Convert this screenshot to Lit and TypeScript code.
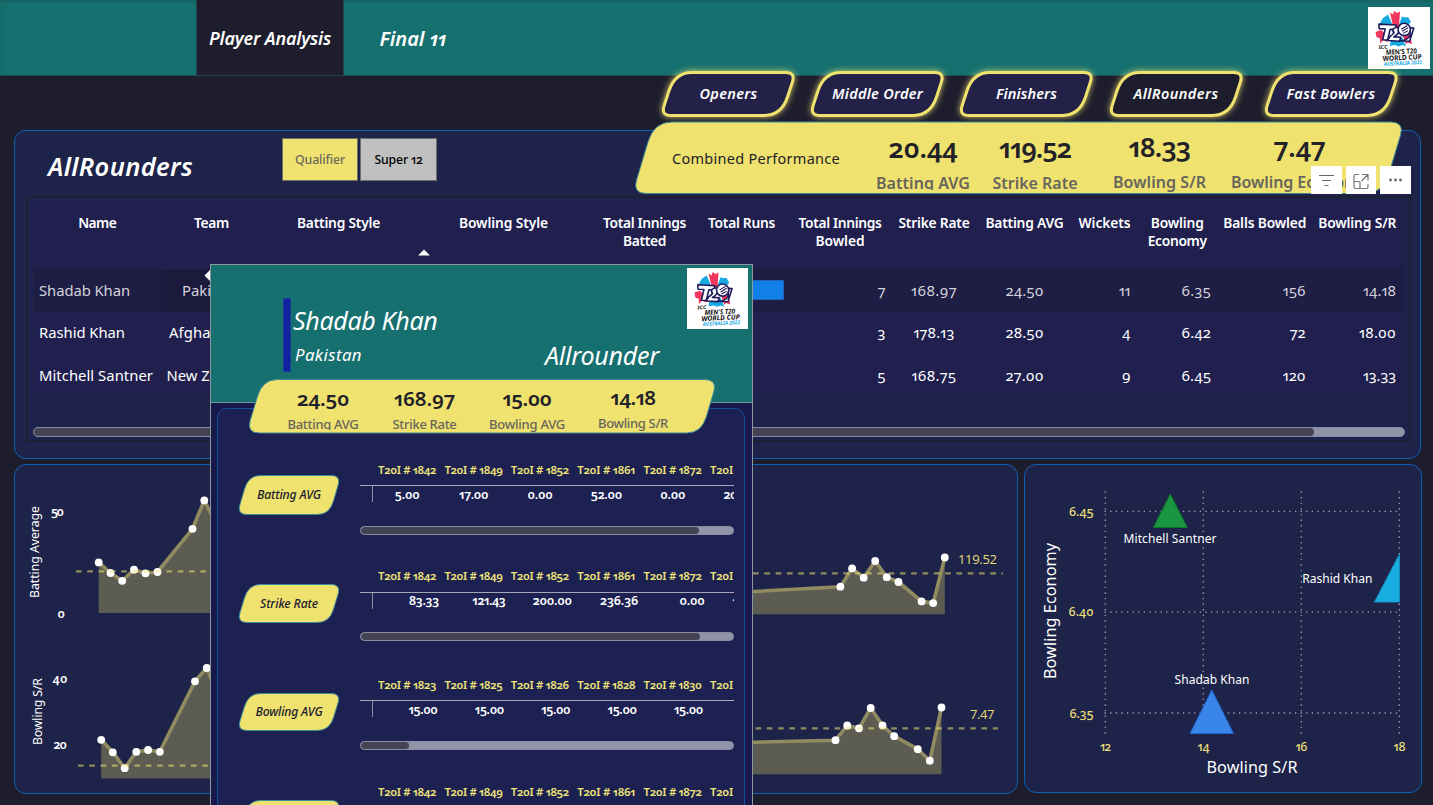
import { LitElement, html, svg, css } from "lit";
import { classMap } from "lit/directives/class-map.js";
import { styleMap } from "lit/directives/style-map.js";

/** A single line of text tracked out (or in) to a given width. */
class FitText extends LitElement {
  static properties = { w: { type: Number }, text: {}, spacing: { state: true } };
  static styles = css`
    :host { display: inline-block; white-space: nowrap; text-align: left; font-variant-ligatures: none; }
  `;
  declare w: number;
  declare text: string;
  declare spacing: number;
  constructor() {
    super();
    this.w = 0;
    this.text = "";
    this.spacing = 0;
  }
  firstUpdated() {
    const span = this.renderRoot.querySelector("span") as HTMLElement;
    const natural = span.getBoundingClientRect().width;
    const n = Math.max(1, this.text.length);
    if (this.w && natural) this.spacing = (this.w - natural) / n;
  }
  render() {
    return html`<span style=${styleMap({ letterSpacing: this.spacing + "px" })}>${this.text}</span>`;
  }
}
customElements.define("fit-text", FitText);

const fit = (text: string, w: number) => html`<fit-text .text=${text} .w=${w}></fit-text>`;

/** Slanted plate: wide rounding top-left and bottom-right, tight rounding on the acute corners. */
function platePath(w: number, h: number, s: number, R: number, r: number) {
  const k = s / Math.hypot(s, h);
  const c = h / Math.hypot(s, h);
  const R2 = R * 1.15;
  return [
    `M${s + R} 0`,
    `L${w - r} 0`,
    `Q${w} 0 ${w - k * r} ${c * r}`,
    `L${w - s + k * R2} ${h - c * R2}`,
    `Q${w - s} ${h} ${w - s - R} ${h}`,
    `L${r} ${h}`,
    `Q0 ${h} ${k * r} ${h - c * r}`,
    `L${s - k * R2} ${c * R2}`,
    `Q${s} 0 ${s + R} 0Z`,
  ].join(" ");
}

const logo = svg`
  <rect width="62" height="62" fill="#fff"/>
  <path d="M11 18L15 11L20 7.500L25 19Z M31 18L34 9.500L38 10.500L40 10L43 15L39 19Z M23 30L34 30L38 39.500L34.500 38L30.500 39.500L27 38L22 39Z" fill="#19a9e1"/>
  <path d="M22 5.500L25.200 7.500L26 4L29 6L32 4.500L31 20L25.200 20Z M7.500 25L13 23L20 29L19 35L15.500 33L12 36.500L12 31.500L8.500 30Z M35 29L45 27L42.500 30.500L44 37L39.500 35.500L38 37.500Z" fill="#f0365c"/>
  <g transform="rotate(3 28 26)" stroke="#1d1a5b" stroke-width="1.6" fill="#fff" stroke-linejoin="round">
    <path d="M10.500 18H28L27 22.500H22L20 33.500H15L17 22.500H11Z"/>
    <path d="M25 22Q31 18 31 23Q31 27 26 30L33 30L32 34H20L22 30Q28 25 25 25Z"/>
    <path d="M42 20L45.500 20L42 33.500H32Q40 33 42 28Z"/>
    <circle cx="36" cy="22" r="6.200"/>
    <path d="M33 22L39 18M34 24L40 20M35 26L40 23" stroke-width="1.100" fill="none"/>
  </g>
  <g transform="rotate(-3 31 48)" class="lg">
    <text x="11" y="41" textLength="9" lengthAdjust="spacingAndGlyphs" font-size="5" fill="#222">ICC</text>
    <text x="18" y="47.200" textLength="31" lengthAdjust="spacingAndGlyphs" font-size="7" fill="#111">MEN'S T20</text>
    <text x="14.500" y="53.200" textLength="39" lengthAdjust="spacingAndGlyphs" font-size="7" fill="#111">WORLD CUP</text>
    <text x="15.500" y="58.200" textLength="38" lengthAdjust="spacingAndGlyphs" font-size="5.400" fill="#19a9e1">AUSTRALIA 2022</text>
  </g>`;

const tabs = [
  { x: 662, label: "Openers", w: 58 },
  { x: 811, label: "Middle Order", w: 91 },
  { x: 960, label: "Finishers", w: 61 },
  { x: 1109.5, label: "AllRounders", w: 85, active: true },
  { x: 1264.5, label: "Fast Bowlers", w: 89 },
];

const kpis = [
  { v: "20.44", vw: 69, l: "Batting AVG", lw: 94, c: 923, clip: true },
  { v: "119.52", vw: 72, l: "Strike Rate", lw: 85, c: 1035 },
  { v: "18.33", vw: 62, l: "Bowling S/R", lw: 93, c: 1159.5, up: true },
  { v: "7.47", vw: 52, l: "Bowling Economy", lw: 137, c: 1299.5, up: true },
];

const headers: [string, number][][] = [
  [["Name", 38]],
  [["Team", 35]],
  [["Batting Style", 83]],
  [["Bowling Style", 89]],
  [["Total Innings", 83], ["Batted", 43]],
  [["Total Runs", 67]],
  [["Total Innings", 83], ["Bowled", 49]],
  [["Strike Rate", 71]],
  [["Batting AVG", 78]],
  [["Wickets", 52]],
  [["Bowling", 53], ["Economy", 59]],
  [["Balls Bowled", 83]],
  [["Bowling S/R", 78]],
];

const players = [
  { name: "Shadab Khan", nw: 91, team: "Pakistan", tw: 59, inn: "7", sr: ["168.97", 46], avg: "24.50", wk: "11", eco: "6.35", balls: "156", bsr: ["14.18", 33], hover: true },
  { name: "Rashid Khan", nw: 86, team: "Afghanistan", tw: 85, inn: "3", sr: ["178.13", 41], avg: "28.50", wk: "4", eco: "6.42", balls: "72", bsr: ["18.00", 37] },
  { name: "Mitchell Santner", nw: 114, team: "New Zealand", tw: 90, inn: "5", sr: ["168.75", 45], avg: "27.00", wk: "9", eco: "6.45", balls: "120", bsr: ["13.33", 33] },
] as any[];

const cardKpis = [
  { v: "24.50", vw: 52, l: "Batting AVG", lw: 71, c: 323, clip: true },
  { v: "168.97", vw: 61, l: "Strike Rate", lw: 64, c: 424.5 },
  { v: "15.00", vw: 49, l: "Bowling AVG", lw: 76, c: 527 },
  { v: "14.18", vw: 45, l: "Bowling S/R", lw: 70, c: 633, up: true },
];

const cardRows = [
  { label: "Batting AVG", lw: 64, h: 106, gap: 16, ph: 39.5, ids: [1842, 1849, 1852, 1861, 1872], vals: [["5.00", 25], ["17.00", 29], ["0.00", 25], ["52.00", 31], ["0.00", 25], ["20.00", 31]], mid: true, thumb: 338 },
  { label: "Strike Rate", lw: 58, h: 108.5, gap: 19, ph: 38.5, ids: [1842, 1849, 1852, 1861, 1872], vals: [["83.33", 30], ["121.43", 33], ["200.00", 39], ["236.36", 38], ["0.00", 25], ["133.33", 38]], low: true, thumb: 339 },
  { label: "Bowling AVG", lw: 67, h: 107.5, gap: 19, ph: 37.5, ids: [1823, 1825, 1826, 1828, 1830], vals: [["15.00", 29], ["15.00", 29], ["15.00", 29], ["15.00", 29], ["15.00", 29]], thumb: 48 },
  { label: "Bowling S/R", lw: 66, h: 107.5, gap: 19, ph: 38.5, ids: [1842, 1849, 1852, 1861, 1872], vals: [], thumb: 338 },
] as any[];

type P = [number, number];
const series: { pts: P[]; base: number }[] = [
  { base: 613, pts: [[98.7, 562.4], [110.5, 573], [122.2, 580.8], [134, 569.7], [145.5, 573.3], [157.5, 572], [192.5, 528.8], [204.3, 500.4], [216, 524], [300, 560]] },
  { base: 778.5, pts: [[101.2, 739.8], [112.8, 752.3], [124.7, 768.2], [136.3, 751.8], [148.1, 750], [159.8, 751.8], [195, 681.3], [206.8, 668], [218, 696], [300, 740]] },
  { base: 614.3, pts: [[700, 594.5], [840.4, 586.7], [852.1, 568.4], [863.7, 577.7], [875.2, 561], [886.8, 577.2], [898.5, 582], [921.6, 601.4], [933.2, 603.1], [944.8, 557.5]] },
  { base: 774.3, pts: [[700, 743.6], [835.5, 740.2], [847.2, 725.5], [859, 728.3], [870.7, 708], [882.5, 725.3], [894.2, 736.2], [917.8, 749.2], [929.8, 760.7], [941.5, 707.5]] },
];
const refs = [
  { x1: 76, x2: 400, y: 571.4 },
  { x1: 78, x2: 400, y: 765.6 },
  { x1: 741.7, x2: 1003, y: 573.4 },
  { x1: 744.2, x2: 998, y: 728.4 },
];

class AppRoot extends LitElement {
  static styles = css`
    :host {
      display: block; position: relative; width: 1433px; height: 805px; overflow: hidden;
      background: #1e1d2d; color: #fff;
      font-family: "Noto Sans", "Open Sans", sans-serif;
      font-variant-numeric: oldstyle-nums proportional-nums;
    }
    * { box-sizing: border-box; }
    svg { display: block; overflow: visible; }
    .center { display: flex; align-items: center; justify-content: center; }

    .top { height: 76px; background: #16706f; border-bottom: 1px solid #1d4b57; display: flex; padding-left: 196px; box-shadow: inset 0 2px 3px rgba(0,0,0,.12); }
    .nav { height: 76px; font-style: italic; font-weight: 600; }
    .nav.on { width: 148px; background: #1e1d2d; border: 1px solid #23454f; border-top: 0; font-size: 18px; padding-top: 1px; }
    .nav.off { width: 138px; font-size: 20px; padding-top: 1px; }
    .logo { width: 62px; height: 62px; margin: 7px 3px 0 auto; }
    .lg { font-weight: 700; font-variant-numeric: lining-nums; }

    .tab { position: absolute; top: 71px; width: 133px; height: 46px; padding-bottom: 2px; font-size: 14.5px; font-style: italic; font-weight: 600; }
    .tab svg, .banner > svg, .pill svg, .strip > svg { position: absolute; inset: 0; }
    .tab fit-text, .pill fit-text { position: relative; }
    .glow { filter: drop-shadow(0 0 3px rgba(240,228,112,.85)); }

    .panel { background: #1e2349; border: 1px solid #0f60b3; border-radius: 12px; }
    .main { margin: 54px 0 0 14px; width: 1407px; height: 329px; padding: 7px 9px 0 11px; }
    .bar { height: 58px; display: flex; padding: 0 0 0 22px; }
    .bar h1 { margin: 0; width: 234px; font-size: 25.5px; line-height: 34px; padding-top: 11px; font-style: italic; font-weight: 600; }
    .chip { height: 43px; border: 1.5px solid #6e6e6e; font-size: 12.3px; font-weight: 500; }
    .chip.y { width: 76px; background: #efe26f; color: #6b6860; margin-right: 2px; }
    .chip.g { width: 77px; background: #c0c0c0; color: #000; }

    .grid { border: 2px solid #1e1f31; height: 246px; padding: 3px 4px 0 6px; display: flex; flex-direction: column; background: #1e234b; }
    .row { display: grid; grid-template-columns: 126.5px 102px 152px 178px 104px 90px 107px 81px 100px 60px 85.5px 89.5px 95.5px; background: #201f4e; width: 1371px; }
    .head { height: 68px; font-size: 13.8px; font-weight: 600; line-height: 18px; padding-top: 13px; position: relative; }
    .head > div { text-align: center; display: flex; flex-direction: column; align-items: center; }
    .line { height: 42.7px; align-items: center; font-size: 14.8px; }
    .line.hover { background: #1e1d44; color: #d4d3dc; }
    .line > div { height: 100%; display: flex; align-items: center; padding-bottom: 2px; }
    .line.hover > div { padding-bottom: 1px; }
    .line .l { padding-left: 5px; }
    .line .c { justify-content: center; }
    .line .r { justify-content: flex-end; padding-right: 9px; }
    .line .r2 { justify-content: flex-end; padding-right: 4px; }
    .line .r3 { justify-content: flex-end; padding-right: 8px; }
    .line .r4 { justify-content: flex-end; padding-right: 4px; }
    .hover .tc { background: #1b1a3c; }
    .databar { width: 87px; height: 20px; background: #1080e8; border: 1px solid #2060b8; flex: none; }
    .sort { position: absolute; left: 384px; top: 48px; }
    .scroll { background: #9193a9; border: 1px solid #8a8ca2; border-radius: 6px; overflow: hidden; }
    .thumb { height: 100%; background: #434354; border-radius: 5px; }
    .grid .scroll { width: 1372px; height: 10px; margin: 30px 0 0 -1px; }

    .banner { position: absolute; left: 632px; top: 122px; width: 773px; height: 72px; color: #222128; }
    .caption { position: absolute; left: 40px; top: 25px; font-size: 14.5px; line-height: 22px; }
    .kpi { position: absolute; top: 6px; width: 140px; margin-left: -70px; text-align: center; }
    .kpi .v { font-size: 27px; line-height: 40px; height: 40px; font-weight: 600; }
    .kpi .l { font-size: 16px; line-height: 22px; font-weight: 600; color: #68655c; height: 26px; overflow: hidden; margin-top: 4px; }
    .kpi .l.clip { height: 18px; }
    .banner .kpi.up { margin-top: -1px; }

    .tool { position: absolute; top: 166px; height: 28px; background: #fff; }

    .lower { display: flex; gap: 6px; margin: 5px 0 0 14px; }
    .trend { width: 1004px; height: 330px; }
    .scatter { width: 398px; height: 329px; }
    .lower svg { margin: -1px; }

    .card { position: absolute; left: 210px; top: 264px; width: 543px; height: 560px; border: 1px solid #8b999c; background: #19184a; }
    .cardtop { height: 138px; background: #16706f; border-bottom: 1px solid #6f9a9c; position: relative; font-style: italic; display: flex; padding: 33px 0 0 72px; }
    .stripe { width: 8px; height: 74px; background: #1121a0; border: 1px solid #15409a; flex: none; }
    .who { padding: 4px 0 0 2px; width: 255px; flex: none; }
    .who .n { font-size: 25px; line-height: 36px; }
    .who .t { font-size: 16.8px; line-height: 24px; margin: 5px 0 0 2px; }
    .role { font-size: 25px; line-height: 34px; padding-top: 40px; margin-left: -1px; }
    .cardlogo { position: absolute; left: 476px; top: 3px; width: 61px; height: 61px; }
    .strip { position: absolute; left: 35px; top: 114px; width: 470px; height: 55px; color: #222128; }
    .strip .kpi { top: 2px; width: 90px; margin-left: -45px; }
    .strip .kpi.up { top: 1px; }
    .strip .v { font-size: 20.5px; line-height: 34px; height: 34px; }
    .strip .l { font-size: 13px; line-height: 20px; height: 22px; margin-top: -1px; font-weight: 500; }
    .strip .l.clip { height: 15.5px; }
    .inner { margin: 5px 7px 0 6px; height: 440px; border: 1px solid #11519c; border-radius: 10px; background: #1c2152; padding: 50px 0 0 20px; position: relative; }
    .stat { display: flex; }
    .pill { position: relative; width: 102px; font-size: 12.2px; font-style: italic; font-weight: 500; color: #1c1c30; flex: none; }
    .matches { width: 374px; margin-left: 20px; overflow: hidden; }
    .cells { display: grid; grid-template-columns: repeat(5, 66.4px) 66px; padding-left: 14px; width: 420px; font-weight: 600; }
    .ids { height: 27px; font-size: 11.4px; line-height: 22px; color: #efe478; border-bottom: 1px solid #a6a8b8; }
    .ids.low { height: 28px; }
    .ids > div { padding-left: 4px; }
    .vals { height: 40px; font-size: 12.4px; line-height: 18px; position: relative; }
    .vals.low { height: 39px; line-height: 16px; }
    .vals > div { text-align: right; padding-right: 3px; white-space: nowrap; }
    .vals.low > div { padding-right: 1.5px; }
    .vals.mid > div { text-align: center; padding-right: 0; }
    .tick { position: absolute; left: 12px; top: 0; width: 1px; height: 16px; background: #8c8ea6; }
    .stat .scroll { height: 9px; width: 374px; }
    .pointer { position: absolute; left: 204px; top: 270px; }
    .ax { font-weight: 600; }
    .seg { font-family: "Open Sans", sans-serif; font-variant-numeric: lining-nums; }
  `;

  renderTrends() {
    return svg`
      ${series.map(({ pts, base }) => {
        const d = pts.map((p) => p.join(" ")).join(" L");
        return svg`
          <path d="M${pts[0][0]} ${base} L${d} L${pts[pts.length - 1][0]} ${base}Z" fill="#5d5c53"/>
          <path d=${"M" + d} fill="none" stroke="#918b60" stroke-width="3.6" stroke-linejoin="round"/>`;
      })}
      ${series.map(({ pts }) => pts.map(([x, y]) => svg`<circle cx=${x} cy=${y} r="3.9" fill="#fff"/>`))}
      ${refs.map((r) => svg`<line x1=${r.x1} x2=${r.x2} y1=${r.y} y2=${r.y} stroke="#efe26f" stroke-opacity=".55" stroke-width="2.3" stroke-dasharray="5.65 5.65"/>`)}
      <g fill="#fff" font-size="12.3" class="ax">
        <text x="51" y="516" textLength="13">50</text>
        <text x="57.5" y="618" textLength="7">0</text>
        <text x="52.5" y="683" textLength="15">40</text>
        <text x="53.5" y="749" textLength="13.5">20</text>
      </g>
      <g fill="#fff" font-size="12.3">
        <text transform="translate(38.5 598) rotate(-90)" textLength="92">Batting Average</text>
        <text transform="translate(41.5 745) rotate(-90)" textLength="67">Bowling S/R</text>
      </g>
      <g fill="#e8dd78" font-size="13" class="seg">
        <text x="958" y="564" textLength="39">119.52</text>
        <text x="970" y="719" textLength="24.5">7.47</text>
      </g>`;
  }

  renderScatter() {
    return svg`
      <g stroke="#9b9da8" stroke-width="1.3" stroke-dasharray="1.4 4.2">
        ${[1105.3, 1203.3, 1301.3, 1399.3].map((x) => svg`<line x1=${x} x2=${x} y1="491.5" y2="735"/>`)}
        ${[511.4, 612.2, 713].map((y) => svg`<line y1=${y} y2=${y} x1="1104.5" x2="1399"/>`)}
      </g>
      <path d="M1170.3 494L1187.3 527.5H1153.3Z" fill="#1a9a41" stroke="#0b7425" fill-opacity=".97"/>
      <path d="M1399.3 554.5V602H1374.5Z" fill="#19aee0" stroke="#1590c4"/>
      <path d="M1211.8 690L1233.5 733.5H1190Z" fill="#3a86e8" stroke="#1f63cc"/>
      <g fill="#fff" font-size="12">
        <text x="1123.5" y="543" textLength="93">Mitchell Santner</text>
        <text x="1302.3" y="583" textLength="70">Rashid Khan</text>
        <text x="1174.5" y="684" textLength="75">Shadab Khan</text>
        <text x="1206.5" y="773" font-size="16.2" textLength="91">Bowling S/R</text>
        <text transform="translate(1055.5 679) rotate(-90)" font-size="16.2" textLength="136">Bowling Economy</text>
      </g>
      <g fill="#e8dd78" font-size="12.4" font-weight="500">
        <text x="1069" y="516" textLength="24.5">6.45</text>
        <text x="1068.5" y="616" textLength="25">6.40</text>
        <text x="1069.5" y="717.5" textLength="24">6.35</text>
        <text x="1100" y="751" textLength="11">12</text>
        <text x="1197.5" y="751" textLength="12">14</text>
        <text x="1295.5" y="751" textLength="12">16</text>
        <text x="1393.5" y="751" textLength="12">18</text>
      </g>`;
  }

  render() {
    return html`
      <header class="top">
        <div class="nav on center">${fit("Player Analysis", 122)}</div>
        <div class="nav off center">${fit("Final 11", 67)}</div>
        <svg class="logo" viewBox="0 0 62 62">${logo}</svg>
      </header>

      <section class="panel main">
        <div class="bar">
          <h1>${fit("AllRounders", 145)}</h1>
          <div class="chip y center">${fit("Qualifier", 50)}</div>
          <div class="chip g center">${fit("Super 12", 48)}</div>
        </div>
        <div class="grid">
          <div class="row head">
            ${headers.map((h) => html`<div>${h.map(([t, w]) => fit(t, w))}</div>`)}
            <svg class="sort" width="12" height="7"><path d="M0 6.5L6 .5L12 6.5Z" fill="#fff"/></svg>
          </div>
          ${players.map(
            (p) => html`<div class=${classMap({ row: true, line: true, hover: !!p.hover })}>
              <div class="l">${fit(p.name, p.nw)}</div>
              <div class="c tc">${fit(p.team, p.tw)}</div>
              <div></div><div></div><div></div>
              <div>${p.hover ? html`<div class="databar"></div>` : null}</div>
              <div class="r3">${p.inn}</div>
              <div class="c">${fit(p.sr[0], p.sr[1])}</div>
              <div class="c">${fit(p.avg, 38)}</div>
              <div class="r2">${p.wk}</div>
              <div class="r">${fit(p.eco, 29.5)}</div>
              <div class="r4">${p.balls}</div>
              <div class="r">${fit(p.bsr[0], p.bsr[1])}</div>
            </div>`,
          )}
          <div class="scroll"><div class="thumb" style=${styleMap({ width: "1280px" })}></div></div>
        </div>
      </section>

      <section class="lower">
        <div class="panel trend"><svg width="1004" height="330" viewBox="14 464 1004 330">${this.renderTrends()}</svg></div>
        <div class="panel scatter"><svg width="398" height="329" viewBox="1024 464 398 329">${this.renderScatter()}</svg></div>
      </section>

      ${tabs.map(
        (t) => html`<div class="tab center" style=${styleMap({ left: t.x + "px" })}>
          <svg width="133" height="46"><path class="glow" transform="translate(-1 1.4)" d=${platePath(134.5, 43, 14, 17, 10)}
            fill=${t.active ? "#1e1d2d" : "#232148"} stroke="#efe26f" stroke-width="3"/></svg>
          ${fit(t.label, t.w)}
        </div>`,
      )}

      <div class="banner">
        <svg width="773" height="72"><path transform="translate(.5 0)" d=${platePath(772, 71.5, 21.5, 18, 14)} fill="#efe26f" stroke="#3d8a9a"/></svg>
        <div class="caption">${fit("Combined Performance", 168)}</div>
        ${kpis.map(
          (k) => html`<div class=${classMap({ kpi: true, up: !!k.up })} style=${styleMap({ left: k.c - 632 + "px" })}>
            <div class="v">${fit(k.v, k.vw)}</div>
            <div class=${classMap({ l: true, clip: !!k.clip })}>${fit(k.l, k.lw)}</div>
          </div>`,
        )}
      </div>

      <svg class="tool" style=${styleMap({ left: "1311px" })} width="31" height="28"><path d="M8 9.500H23M11 14.500H20M13.500 19.500H17.500" stroke="#666" stroke-width="1.2" fill="none"/></svg>
      <svg class="tool" style=${styleMap({ left: "1346px" })} width="30" height="28"><path d="M13 8.500H9.500Q8 8.500 8 10V21Q8 22.500 9.500 22.500H20.500Q22 22.500 22 21V18M8 15.500H12.500Q14 15.500 14 17V22.500M16 8.500H22V14.500M22 8.500L15.500 15" stroke="#777" stroke-width="1.2" fill="none"/></svg>
      <svg class="tool" style=${styleMap({ left: "1380px" })} width="31" height="28"><g fill="#666"><circle cx="10.500" cy="14" r="1.400"/><circle cx="15.500" cy="14" r="1.400"/><circle cx="20.500" cy="14" r="1.400"/></g></svg>

      <svg class="pointer" width="6" height="11"><path d="M6 0V11L.5 5.500Z" fill="#fff"/></svg>

      <aside class="card">
        <div class="cardtop">
          <div class="stripe"></div>
          <div class="who">
            <div class="n">${fit("Shadab Khan", 144.500)}</div>
            <div class="t">${fit("Pakistan", 67)}</div>
          </div>
          <div class="role">${fit("Allrounder", 114)}</div>
          <svg class="cardlogo" viewBox="0 0 62 62">${logo}</svg>
        </div>
        <div class="inner">
          ${cardRows.map(
            (r) => html`<div class="stat" style=${styleMap({ height: r.h + "px" })}>
              <div class="pill center" style=${styleMap({ marginTop: r.gap + "px", height: r.ph + "px" })}>
                <svg width="102" height=${r.ph}><path transform="translate(-1 .5)" d=${platePath(104, r.ph - 0.5, 11.5, 12, 10)} fill="#efe26f" stroke="#3d8a9a"/></svg>
                ${fit(r.label, r.lw)}
              </div>
              <div class="matches">
                <div class=${classMap({ cells: true, ids: true, low: !!r.low })}>${r.ids.map((i: number) => html`<div>${fit("T20I # " + i, 58)}</div>`)}<div>${fit("T20I", 23)}</div></div>
                <div class=${classMap({ cells: true, vals: true, mid: !!r.mid, low: !!r.low })}>
                  <span class="tick"></span>
                  ${r.vals.map(([v, w]: [string, number]) => html`<div>${fit(v, w)}</div>`)}
                </div>
                <div class="scroll"><div class="thumb" style=${styleMap({ width: r.thumb + "px" })}></div></div>
              </div>
            </div>`,
          )}
        </div>
        <div class="strip">
          <svg width="470" height="55"><path transform="translate(.5 .5)" d=${platePath(471, 53.5, 16, 15, 13)} fill="#efe26f" stroke="#3d8a9a"/></svg>
          ${cardKpis.map(
            (k) => html`<div class=${classMap({ kpi: true, up: !!k.up })} style=${styleMap({ left: k.c - 246 + "px" })}>
              <div class="v">${fit(k.v, k.vw)}</div>
              <div class=${classMap({ l: true, clip: !!k.clip })}>${fit(k.l, k.lw)}</div>
            </div>`,
          )}
        </div>
      </aside>
    `;
  }
}
customElements.define("app-root", AppRoot);
